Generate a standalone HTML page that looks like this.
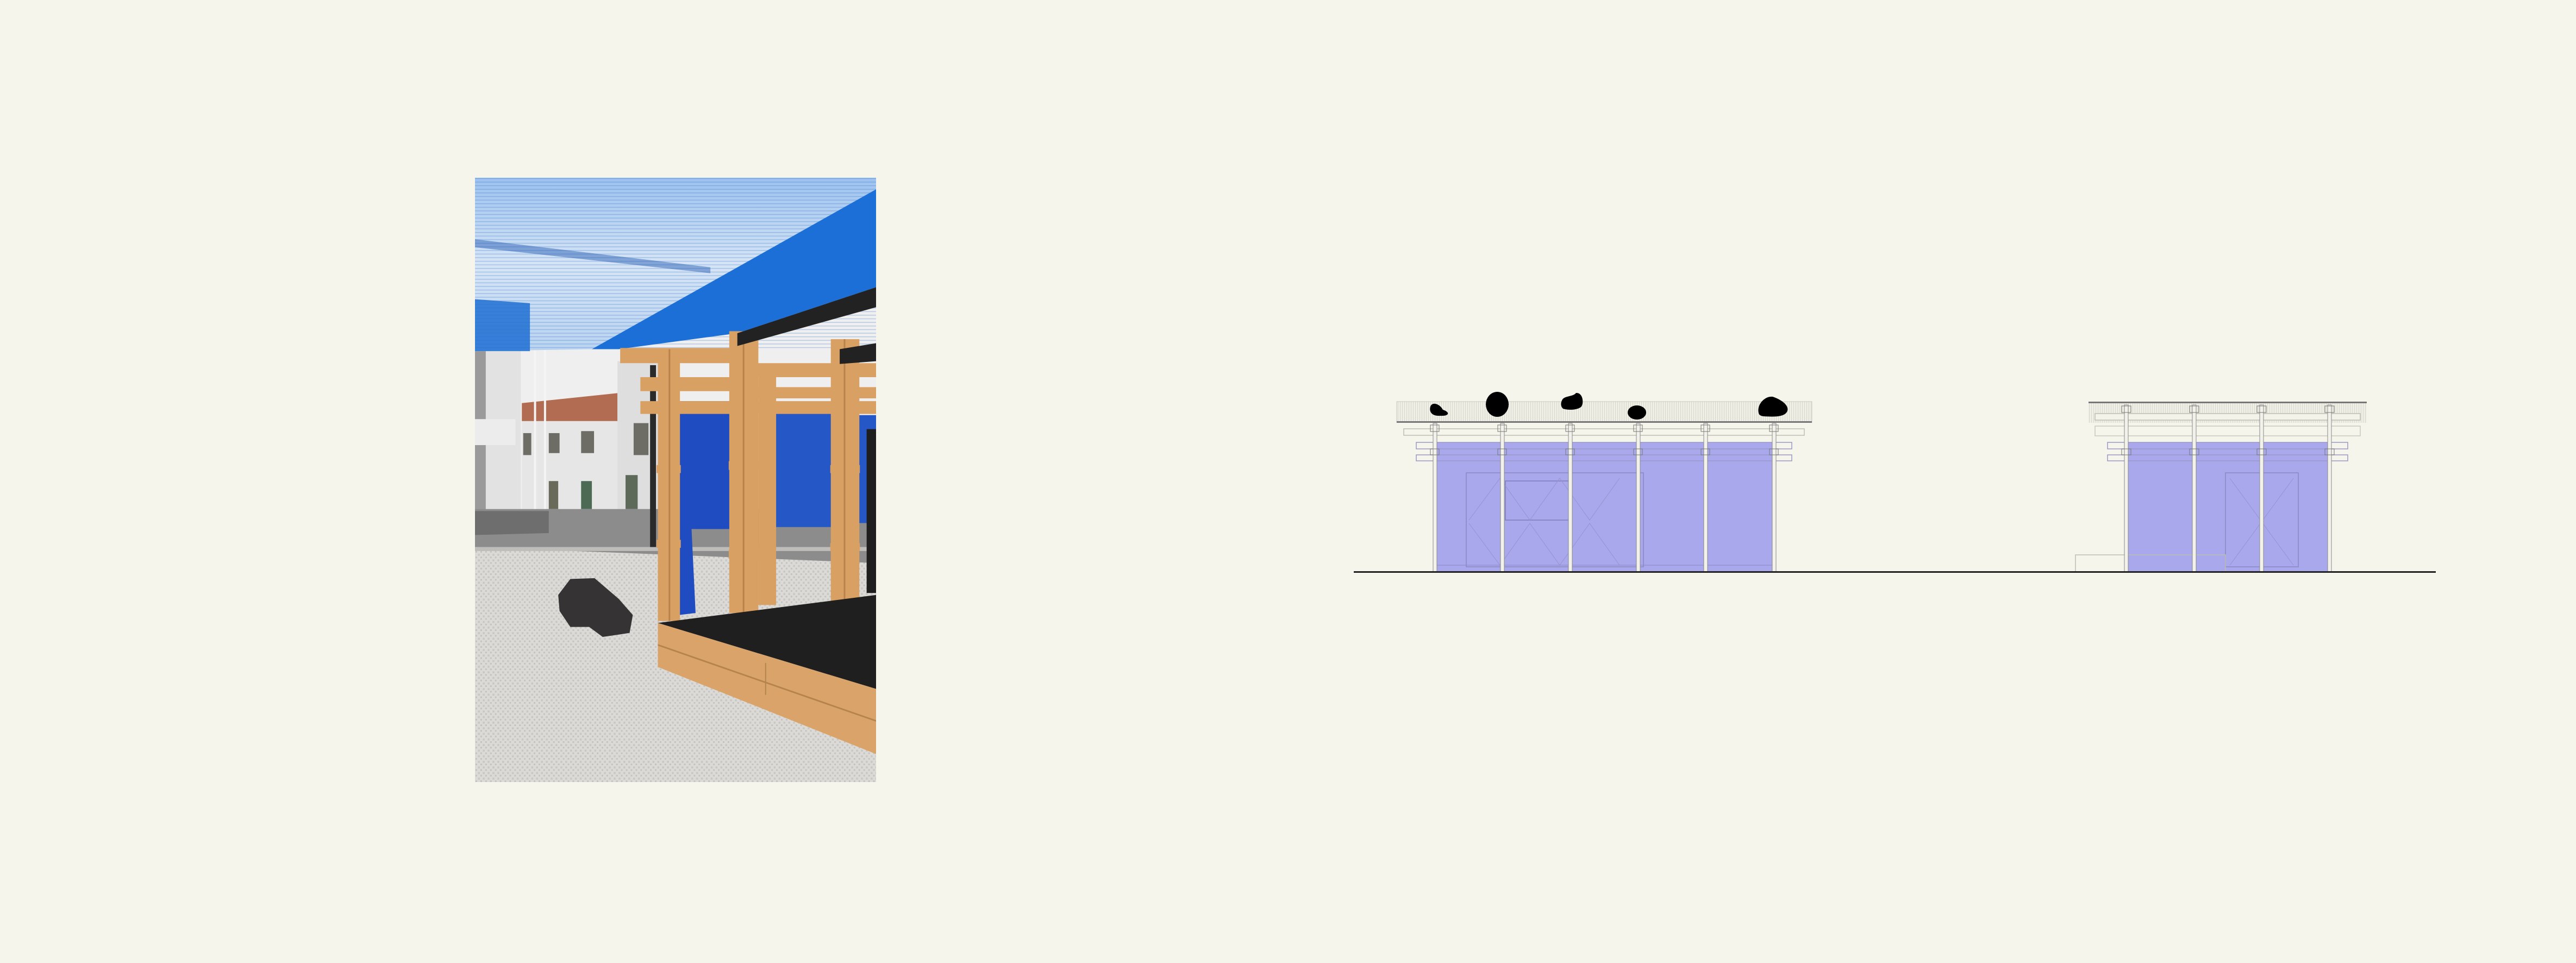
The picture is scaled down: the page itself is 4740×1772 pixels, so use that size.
<!DOCTYPE html>
<html><head><meta charset="utf-8"><style>
html,body{margin:0;padding:0;background:#f5f5eb;}
body{width:4740px;height:1772px;position:relative;overflow:hidden;}
svg{position:absolute;}
</style></head><body>
<svg style="left:874px;top:327px" width="738" height="1112" viewBox="26 26 1489 1512" preserveAspectRatio="none">
<defs>
<linearGradient id="sky" x1="0" y1="0" x2="0" y2="1"><stop offset="0" stop-color="#9cc2ee"/><stop offset="0.5" stop-color="#d6e5f5"/><stop offset="1" stop-color="#b9d3f0"/></linearGradient>
<pattern id="cob" width="18" height="14" patternUnits="userSpaceOnUse"><rect width="18" height="14" fill="#dcdad6"/><rect x="1" y="1" width="7" height="5" fill="#c9c7c3"/><rect x="10" y="8" width="6" height="4" fill="#c4c2be"/></pattern>
<pattern id="str" width="40" height="9" patternUnits="userSpaceOnUse"><rect width="40" height="9" fill="none"/><rect y="0" width="40" height="2" fill="#2e6fd0" opacity=".3"/></pattern>
</defs>
<rect x="26" y="26" width="1489" height="1512" fill="#efefef"/>
<rect x="26" y="460" width="170" height="400" fill="#e2e2e2"/>
<rect x="26" y="460" width="40" height="400" fill="#9a9a9a"/>
<rect x="26" y="630" width="150" height="65" fill="#ececec"/>
<polygon points="200,590 555,565 555,635 200,635" fill="#b26c52"/>
<rect x="200" y="635" width="355" height="225" fill="#e6e6e6"/>
<rect x="555" y="485" width="150" height="375" fill="#dedede"/>
<rect x="300" y="665" width="40" height="50" fill="#6d6d66"/>
<rect x="420" y="660" width="48" height="55" fill="#6d6d66"/>
<rect x="615" y="640" width="55" height="80" fill="#6d6d66"/>
<rect x="205" y="665" width="30" height="55" fill="#6d6d66"/>
<rect x="300" y="785" width="35" height="70" fill="#6a6a5a"/>
<rect x="420" y="785" width="40" height="70" fill="#4d6a55"/>
<rect x="585" y="770" width="45" height="85" fill="#5d6a5a"/>
<rect x="245" y="300" width="8" height="560" fill="#f4f4f4"/>
<rect x="282" y="310" width="8" height="550" fill="#f4f4f4"/>
<rect x="26" y="855" width="1489" height="135" fill="#8c8c8c"/>
<polygon points="26,860 300,860 300,915 26,920" fill="#6e6e6e"/>
<polygon points="26,950 1515,990 1515,1538 26,1538" fill="url(#cob)"/>
<rect x="26" y="950" width="1489" height="10" fill="#bfbdb9"/>
<path d="M335,1070 L380,1030 L470,1028 L560,1080 L612,1120 L600,1165 L500,1175 L450,1150 L380,1150 L340,1110 Z" fill="#353333"/>
<polygon points="26,26 1515,26 1515,60 460,455 26,460" fill="url(#sky)"/>
<rect x="26" y="26" width="1489" height="430" fill="url(#str)"/>
<polygon points="26,330 230,340 230,460 26,460" fill="#1f6fd2" opacity=".85"/>
<polygon points="460,455 1515,55 1515,300 1000,415 560,455" fill="#1b6fd6"/>
<polygon points="26,180 900,250 900,265 26,200" fill="#1d55b0" opacity=".45"/>
<rect x="676" y="495" width="22" height="455" fill="#2a2a2a"/>
<rect x="785" y="585" width="190" height="320" fill="#1f4cc0"/>
<polygon points="785,900 830,905 845,1115 785,1120" fill="#1f4cc0"/>
<rect x="1140" y="600" width="210" height="300" fill="#2557c6"/>
<rect x="1450" y="620" width="65" height="270" fill="#2557c6"/>
<rect x="1480" y="655" width="35" height="410" fill="#1e1e1e"/>
<g fill="#d9a064">
<rect x="565" y="452" width="440" height="38"/>
<rect x="640" y="525" width="360" height="35"/>
<rect x="640" y="585" width="875" height="32"/>
<rect x="1075" y="490" width="440" height="35"/>
<rect x="1075" y="550" width="440" height="28"/>
<rect x="705" y="455" width="82" height="680"/>
<rect x="970" y="410" width="108" height="705"/>
<rect x="1078" y="520" width="66" height="575"/>
<rect x="1347" y="430" width="106" height="655"/>
<rect x="700" y="745" width="90" height="20"/>
<rect x="700" y="932" width="90" height="20"/>
<rect x="968" y="735" width="110" height="22"/>
<rect x="968" y="957" width="110" height="22"/>
<rect x="1345" y="745" width="110" height="20"/>
<rect x="1345" y="940" width="110" height="20"/>
</g>
<g fill="#b8824a"><rect x="745" y="455" width="6" height="680"/><rect x="1020" y="410" width="6" height="705"/><rect x="1395" y="430" width="6" height="655"/></g>
<polygon points="1000,415 1515,300 1515,350 1000,447" fill="#222"/>
<polygon points="1380,455 1515,440 1515,485 1380,492" fill="#222"/>
<polygon points="705,1140 1515,1070 1515,1305" fill="#1f1f1f"/>
<polygon points="705,1140 1515,1305 1515,1468 705,1250" fill="#d9a36a"/>
<line x1="705" y1="1195" x2="1515" y2="1385" stroke="#b5834d" stroke-width="4"/>
<line x1="1105" y1="1240" x2="1105" y2="1320" stroke="#b5834d" stroke-width="4"/>
</svg>

<svg style="left:0;top:0" width="4740" height="1772" viewBox="0 0 4740 1772">
<defs>
<pattern id="vl" width="4" height="10" patternUnits="userSpaceOnUse"><rect width="4" height="10" fill="#efefe6"/><rect width="1" height="10" fill="#d6d6cc"/></pattern>
</defs>
<rect x="2570" y="739" width="764" height="38" fill="url(#vl)" stroke="#c8c8bf" stroke-width="1"/>
<rect x="2570" y="775" width="764" height="3" fill="#777"/>
<rect x="2583" y="789" width="737" height="12" fill="none" stroke="#bdbdb3" stroke-width="1.5"/>
<rect x="2642" y="814" width="620" height="238" fill="#aaa8ec"/>
<rect x="2606" y="814" width="691" height="12" fill="none" stroke="#9a98c8" stroke-width="1.5"/>
<rect x="2606" y="837" width="691" height="11" fill="none" stroke="#9a98c8" stroke-width="1.5"/>
<rect x="2698" y="870" width="326" height="173" fill="none" stroke="#8a88c2" stroke-width="1.5"/>
<rect x="2770" y="885" width="118" height="72" fill="none" stroke="#7e7cb8" stroke-width="1.5"/>
<g stroke="#9593cf" stroke-width="1" fill="none">
<path d="M2703,957 L2760,880 L2815,957 L2870,880 L2925,957 L2980,880 M2703,963 L2760,1040 L2815,963 L2870,1040 L2925,963 L2980,1040"/>
</g>
<rect x="2642" y="1040" width="620" height="12" fill="none" stroke="#8a88c2" stroke-width="1"/>
<g fill="#f2f2ea" stroke="#888" stroke-width="1">
<rect x="2637" y="779" width="7" height="273"/><rect x="2761" y="779" width="7" height="273"/><rect x="2886" y="779" width="7" height="273"/><rect x="3011" y="779" width="7" height="273"/><rect x="3135" y="779" width="7" height="273"/><rect x="3261" y="779" width="7" height="273"/>
</g>
<g fill="none" stroke="#777" stroke-width="1">
<rect x="2632" y="782" width="16" height="12"/><rect x="2756" y="782" width="16" height="12"/><rect x="2881" y="782" width="16" height="12"/><rect x="3006" y="782" width="16" height="12"/><rect x="3130" y="782" width="16" height="12"/><rect x="3256" y="782" width="16" height="12"/>
<rect x="2632" y="826" width="16" height="11"/><rect x="2756" y="826" width="16" height="11"/><rect x="2881" y="826" width="16" height="11"/><rect x="3006" y="826" width="16" height="11"/><rect x="3130" y="826" width="16" height="11"/><rect x="3256" y="826" width="16" height="11"/>
</g>
<g fill="#000">
<path d="M2632,748 C2636,738 2650,744 2655,754 C2668,758 2668,766 2650,765 C2635,766 2629,758 2632,748Z"/>
<ellipse cx="2755" cy="744" rx="21" ry="23"/>
<path d="M2875,735 C2880,728 2895,730 2900,723 C2912,722 2915,740 2910,748 C2903,755 2885,755 2876,752 C2871,747 2872,740 2875,735Z"/>
<ellipse cx="3012" cy="759" rx="17" ry="13"/>
<path d="M3236,760 C3232,744 3248,728 3262,730 C3280,736 3294,748 3288,758 C3282,768 3262,767 3245,766 C3238,765 3237,763 3236,760Z"/>
</g>
<rect x="3843" y="742" width="512" height="36" fill="url(#vl)"/>
<rect x="3843" y="739" width="512" height="3" fill="#777"/>
<rect x="3855" y="761" width="488" height="12" fill="#f3f3ea" stroke="#bdbdb3" stroke-width="1.5"/>
<rect x="3855" y="784" width="488" height="18" fill="none" stroke="#c8c8bf" stroke-width="1.5"/>
<rect x="3915" y="814" width="369" height="238" fill="#aaa8ec"/>
<rect x="3878" y="814" width="442" height="12" fill="none" stroke="#9a98c8" stroke-width="1.5"/>
<rect x="3878" y="837" width="442" height="11" fill="none" stroke="#9a98c8" stroke-width="1.5"/>
<rect x="4095" y="870" width="134" height="173" fill="none" stroke="#8a88c2" stroke-width="1.5"/>
<path d="M4103,880 L4220,1040 M4220,880 L4103,1040" stroke="#9593cf" stroke-width="1" fill="none"/>
<rect x="3819" y="1021" width="276" height="31" fill="none" stroke="#bdbdb3" stroke-width="1.5"/>
<g fill="#f2f2ea" stroke="#888" stroke-width="1">
<rect x="3909" y="745" width="7" height="307"/><rect x="4034" y="745" width="7" height="307"/><rect x="4158" y="745" width="7" height="307"/><rect x="4283" y="745" width="7" height="307"/>
</g>
<g fill="none" stroke="#777" stroke-width="1">
<rect x="3904" y="747" width="17" height="12"/><rect x="4029" y="747" width="17" height="12"/><rect x="4153" y="747" width="17" height="12"/><rect x="4278" y="747" width="17" height="12"/>
<rect x="3904" y="826" width="17" height="11"/><rect x="4029" y="826" width="17" height="11"/><rect x="4153" y="826" width="17" height="11"/><rect x="4278" y="826" width="17" height="11"/>
</g>
<rect x="2491" y="1051" width="1991" height="3" fill="#222"/>
</svg>
</body></html>
